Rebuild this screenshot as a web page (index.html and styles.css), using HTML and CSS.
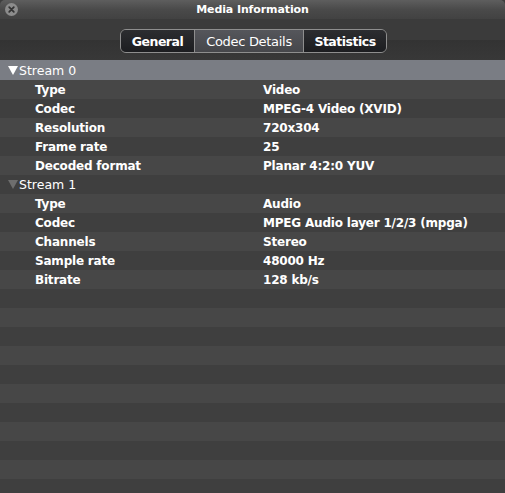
FILE: index.html
```html
<!DOCTYPE html>
<html lang="en">
<head>
<meta charset="UTF-8"/>
<title>Media Information</title>
<link rel="stylesheet" href="styles.css">
</head>
<body>

<!-- title bar -->
<div class="titlebar">
  <span class="close"><svg width="13" height="13" viewBox="0 0 13 13"><circle cx="6.5" cy="6.5" r="6.5" fill="#8c8c8c"/><path d="M4.2 4.2l4.6 4.6M8.8 4.2l-4.6 4.6" stroke="#333" stroke-width="1.8" stroke-linecap="round"/></svg></span>
  <span class="title">Media Information</span>
</div>

<!-- toolbar -->
<div class="toolbar">
  <div class="tabs">
    <span class="tab">General</span>
    <span class="tab active">Codec Details</span>
    <span class="tab">Statistics</span>
  </div>
</div>

<!-- stream list -->
<div class="list">
  <div class="row stream selected"><svg class="tri" width="10" height="9" viewBox="0 0 10 9"><path d="M0 0h10L5 9z"/></svg>Stream 0</div>
  <div class="row"><span class="key">Type</span><span class="val">Video</span></div>
  <div class="row"><span class="key">Codec</span><span class="val">MPEG-4 Video (XVID)</span></div>
  <div class="row"><span class="key">Resolution</span><span class="val">720x304</span></div>
  <div class="row"><span class="key">Frame rate</span><span class="val">25</span></div>
  <div class="row"><span class="key">Decoded format</span><span class="val">Planar 4:2:0 YUV</span></div>
  <div class="row stream"><svg class="tri" width="10" height="9" viewBox="0 0 10 9"><path d="M0 0h10L5 9z"/></svg>Stream 1</div>
  <div class="row"><span class="key">Type</span><span class="val">Audio</span></div>
  <div class="row"><span class="key">Codec</span><span class="val">MPEG Audio layer 1/2/3 (mpga)</span></div>
  <div class="row"><span class="key">Channels</span><span class="val">Stereo</span></div>
  <div class="row"><span class="key">Sample rate</span><span class="val">48000 Hz</span></div>
  <div class="row"><span class="key">Bitrate</span><span class="val">128 kb/s</span></div>
  <div class="row"></div><div class="row"></div><div class="row"></div><div class="row"></div>
  <div class="row"></div><div class="row"></div><div class="row"></div><div class="row"></div>
  <div class="row"></div><div class="row"></div><div class="row"></div>
</div>

</body>
</html>
```

FILE: styles.css
```css
*{margin:0;padding:0;box-sizing:border-box}
html,body{height:100%;overflow:hidden}
body{background:#3e3e3e;color:#fff;font-family:"DejaVu Sans",sans-serif;font-size:12px}

/* ---------- title bar ---------- */
.titlebar{
  height:19px;display:flex;align-items:center;justify-content:center;position:relative;
  background:linear-gradient(#5e5e5e,#4a4a4a 50%,#424242);
  border-radius:5px 5px 0 0
}
.title{font-size:11px;font-weight:bold;letter-spacing:-.1px}
.close{position:absolute;left:5px;top:3px;display:flex}

/* ---------- toolbar / segmented tabs ---------- */
.toolbar{
  height:41px;display:flex;justify-content:center;padding-top:10px;
  background:linear-gradient(#3b3b3b 0,#3b3b3b 21px,#333 21px,#383838)
}
.tabs{
  display:flex;height:24px;border:1px solid #8e8e8e;border-radius:6px;overflow:hidden;
  margin-left:2px
}
.tab{
  display:flex;align-items:center;justify-content:center;font-size:12.5px;font-weight:bold;
  background:linear-gradient(#2c2d30,#1c1d20);letter-spacing:-.5px
}
.tab:nth-child(1){width:73px}
.tab:nth-child(2){width:109px}
.tab:nth-child(3){width:83px}
.tab+.tab{border-left:1px solid #8e8e8e}
.tab.active{font-weight:normal;font-size:13px;letter-spacing:-.3px;background:linear-gradient(#55565b,#46474b)}

/* ---------- list ---------- */
.row{height:19px;display:flex;align-items:center;font-weight:bold;background:#3f3f3f;white-space:nowrap}
.row:nth-child(even){background:#474747}
.row.stream{font-weight:normal;padding-left:8px;font-size:12.5px}
.row.selected{background:#7a7d84;height:20px}
.tri{fill:#6e6e6e;margin-right:1px}
.selected .tri{fill:#fff}
.key{width:263px;padding-left:35px;letter-spacing:-.2px}
.val{letter-spacing:-.2px}
```
